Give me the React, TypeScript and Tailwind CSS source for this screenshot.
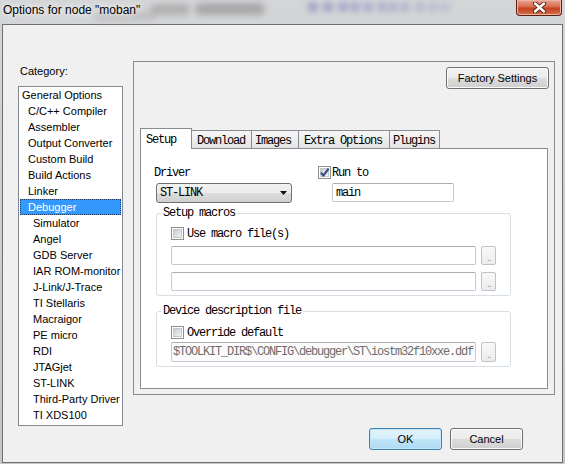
import type { ReactNode } from 'react'

const sans = "font-['Liberation_Sans',Arial,sans-serif]"
const mono = "font-['Liberation_Mono','Courier_New',monospace] text-[12px] tracking-[-1.2px]"

// category tree: [label, depth]
const categories: [string, number][] = [
  ['General Options', 0],
  ['C/C++ Compiler', 1],
  ['Assembler', 1],
  ['Output Converter', 1],
  ['Custom Build', 1],
  ['Build Actions', 1],
  ['Linker', 1],
  ['Debugger', 1],
  ['Simulator', 2],
  ['Angel', 2],
  ['GDB Server', 2],
  ['IAR ROM-monitor', 2],
  ['J-Link/J-Trace', 2],
  ['TI Stellaris', 2],
  ['Macraigor', 2],
  ['PE micro', 2],
  ['RDI', 2],
  ['JTAGjet', 2],
  ['ST-LINK', 2],
  ['Third-Party Driver', 2],
  ['TI XDS100', 2],
]
const indent = ['pl-[2px]', 'pl-[8px]', 'pl-[13px]']
const selected = 'Debugger'

const tabs = [
  { label: 'Setup', cls: 'h-[21px] w-[52px] border-x border-t bg-white pl-[5px] pt-[4px]' },
  { label: 'Download', cls: 'h-[19px] w-[60px] border-t border-r border-b bg-[linear-gradient(#f6f6f6,#e4e4e4)] pl-[5px] pt-[3px]' },
  { label: 'Images', cls: 'h-[19px] w-[47px] border-t border-r border-b bg-[linear-gradient(#f6f6f6,#e4e4e4)] pl-[3px] pt-[3px]' },
  { label: 'Extra Options', cls: 'h-[19px] w-[91px] border-t border-r border-b bg-[linear-gradient(#f6f6f6,#e4e4e4)] pl-[5px] pt-[3px]' },
  { label: 'Plugins', cls: 'h-[19px] w-[50px] border-t border-r border-b bg-[linear-gradient(#f6f6f6,#e4e4e4)] pl-[3px] pt-[3px]' },
]

const blueDots = [313, 328, 343, 355, 368, 382, 393, 405, 420, 433, 445]

function Checkbox({ checked = false }: { checked?: boolean }) {
  return (
    <span className="relative flex h-[13px] w-[13px] shrink-0 items-center justify-center border border-[#8e8f8f] bg-white">
      <span className="h-[9px] w-[9px] border border-[#c4c7cb] bg-[linear-gradient(135deg,#c6cad0,#f4f4f4)]" />
      {checked ? (
        <svg className="absolute left-[0px] top-[0px]" width="11" height="11" viewBox="0 0 11 11">
          <path d="M2 5.6 L4.4 8.6 L9.6 1.6" fill="none" stroke="#34488a" strokeWidth="2" strokeLinejoin="round" />
        </svg>
      ) : null}
    </span>
  )
}

function Browse({ h }: { h: string }) {
  return (
    <div
      className={`${h} ml-[5px] flex w-[15px] items-end justify-center rounded-[2px] border border-[#bfc2c6] bg-[linear-gradient(#f8f8f8,#ececec)] pb-[1px] text-[10px] leading-[10px] text-[#9a9a9a] ${sans}`}
    >
      ..
    </div>
  )
}

function WinButton({ children, primary = false, className = '' }: { children: ReactNode; primary?: boolean; className?: string }) {
  const skin = primary
    ? 'border-[#3c7fb1] bg-[linear-gradient(#e5f4fc,#d4edfa_50%,#bfe4f7_50%,#addaf3)] shadow-[inset_0_0_0_1px_#bfe9fb]'
    : 'border-[#707070] bg-[linear-gradient(#f2f2f2,#ebebeb_50%,#dddddd_50%,#cfcfcf)] shadow-[inset_0_0_0_1px_#fbfbfb]'
  return (
    <div className={`flex h-[22px] items-center justify-center rounded-[3px] border text-[11px] text-black ${skin} ${className}`}>
      {children}
    </div>
  )
}

function Group({ title, children, className = '' }: { title: string; children: ReactNode; className?: string }) {
  return (
    <fieldset className={`ml-[2px] w-[355px] rounded-[3px] border border-[#d5dfe5] ${className}`}>
      <legend className="ml-[4px] px-[2px] leading-[15px]">{title}</legend>
      <div className="pl-[14px]">{children}</div>
    </fieldset>
  )
}

export default function App() {
  return (
    <div className={`relative h-[464px] w-[565px] overflow-hidden bg-[linear-gradient(#d4d5d7,#c5c6c8)] ${sans}`}>
      {/* glass title bar with what shows through it */}
      <div className="relative h-[24px]">
        <div className="absolute left-[150px] top-[4px] h-[11px] w-[40px] rounded-full bg-[#8d8d8d] opacity-50 blur-[3px]" />
        <div className="absolute left-[195px] top-[3px] h-[12px] w-[70px] rounded-full bg-[#7c7c7c] opacity-50 blur-[3px]" />
        <div className="absolute left-[95px] top-[12px] h-[8px] w-[60px] rounded-full bg-[#9a9a9a] opacity-40 blur-[3px]" />
        {blueDots.map((x, i) => (
          <div
            key={x}
            className="absolute top-[2px] h-[10px] w-[10px] rounded-full bg-[#5862b8] blur-[3px]"
            style={{ left: x - 5, opacity: 0.5 - i * 0.03 }}
          />
        ))}
        <div className="absolute left-[3px] top-[3px] text-[12px] leading-[15px] text-black [text-shadow:0_0_6px_#fff,0_0_10px_#fff]">
          Options for node "moban"
        </div>
        <div className="absolute right-[3px] top-0 flex h-[16px] w-[46px] items-center justify-center rounded-b-[4px] border border-t-0 border-[#5a2113] bg-[linear-gradient(#e9a493,#d86a4f_45%,#c3421f_55%,#d0704c)] shadow-[inset_0_0_0_1px_#f0b2a2]">
          <svg width="15" height="11" viewBox="0 0 15 11">
            <path d="M3 1.5 L12 9.5 M12 1.5 L3 9.5" stroke="#4a1a0e" strokeWidth="4.2" strokeLinecap="round" />
            <path d="M3 1.5 L12 9.5 M12 1.5 L3 9.5" stroke="#ffffff" strokeWidth="2.4" strokeLinecap="round" />
          </svg>
        </div>
      </div>

      {/* client area */}
      <div className="ml-[2px] flex h-[439px] w-[561px] flex-col border border-[#6f6f6f] bg-[#f0f0f0] text-[11px] text-black">
        <div className="flex items-start pl-[15px] pt-[36px]">
          <div className="w-[105px]">
            <div className="h-[25px] pl-[2px] pt-[3px] leading-[14px]">Category:</div>
            <div className="h-[340px] border border-[#828790] bg-white">
              {categories.map(([name, depth]) => (
                <div
                  key={name}
                  className={`mx-[1px] h-[16px] leading-[16px] whitespace-nowrap ${indent[depth]} ${
                    name === selected ? 'bg-[#3399ff] text-white outline-1 -outline-offset-1 outline-dotted outline-[#1c3f6e]' : ''
                  }`}
                >
                  {name}
                </div>
              ))}
            </div>
          </div>

          <div className="ml-[10px] flex h-[334px] w-[422px] flex-col border border-[#898c95]">
            <div className="flex justify-end pr-[5px] pt-[5px]">
              <WinButton className="w-[103px]">Factory Settings</WinButton>
            </div>

            <div className={`relative z-10 ml-[6px] mt-[39px] flex h-[21px] items-end ${mono}`}>
              {tabs.map((t) => (
                <div key={t.label} className={`border-[#898c95] leading-[14px] whitespace-nowrap ${t.cls}`}>
                  {t.label}
                </div>
              ))}
            </div>

            <div className={`-mt-[1px] ml-[6px] h-[241px] w-[408px] border border-[#898c95] bg-white pl-[13px] pt-[17px] ${mono}`}>
              <div className="flex">
                <div className="w-[164px]">
                  <div className="flex h-[13px] items-center">Driver</div>
                  <div className="ml-[2px] mt-[4px] flex h-[20px] w-[136px] items-center justify-between rounded-[3px] border border-[#707070] bg-[linear-gradient(#f2f2f2,#ebebeb_50%,#dddddd_50%,#cfcfcf)] pl-[3px] pr-[4px]">
                    <span>ST-LINK</span>
                    <svg width="7" height="4" viewBox="0 0 7 4">
                      <path d="M0 0 H7 L3.5 4 Z" fill="#111" />
                    </svg>
                  </div>
                </div>
                <div>
                  <div className="flex h-[13px] items-center">
                    <Checkbox checked />
                    <span className="ml-[1px]">Run to</span>
                  </div>
                  <div className="ml-[14px] mt-[4px] flex h-[19px] w-[122px] items-center rounded-[2px] border border-[#c5c9cf] border-t-[#abadb3] bg-white pl-[3px]">
                    main
                  </div>
                </div>
              </div>

              <Group title="Setup macros" className="mt-[3px] pb-[4px]">
                <div className="mt-[6px] flex h-[13px] items-center">
                  <Checkbox />
                  <span className="ml-[3px]">Use macro file(s)</span>
                </div>
                <div className="mt-[6px] flex">
                  <div className="h-[19px] w-[305px] rounded-[2px] border border-[#c5c9cf] border-t-[#abadb3] bg-white" />
                  <Browse h="h-[19px]" />
                </div>
                <div className="mt-[7px] flex">
                  <div className="h-[19px] w-[305px] rounded-[2px] border border-[#c5c9cf] border-t-[#abadb3] bg-white" />
                  <Browse h="h-[19px]" />
                </div>
              </Group>

              <Group title="Device description file" className="mt-[8px] pb-[4px]">
                <div className="mt-[7px] flex h-[13px] items-center">
                  <Checkbox />
                  <span className="ml-[3px]">Override default</span>
                </div>
                <div className="mt-[3px] flex">
                  <div className="flex h-[20px] w-[305px] items-center overflow-hidden whitespace-nowrap rounded-[2px] border border-[#c5c9cf] border-t-[#abadb3] bg-[#fbfbfb] pl-[1px] text-[#6d6d6d]">
                    $TOOLKIT_DIR$\CONFIG\debugger\ST\iostm32f10xxe.ddf
                  </div>
                  <Browse h="h-[20px]" />
                </div>
              </Group>
            </div>
          </div>
        </div>

        <div className="mt-[2px] flex justify-end gap-[8px] pr-[39px]">
          <WinButton primary className="w-[73px]">
            OK
          </WinButton>
          <WinButton className="w-[73px]">Cancel</WinButton>
        </div>
      </div>
    </div>
  )
}
